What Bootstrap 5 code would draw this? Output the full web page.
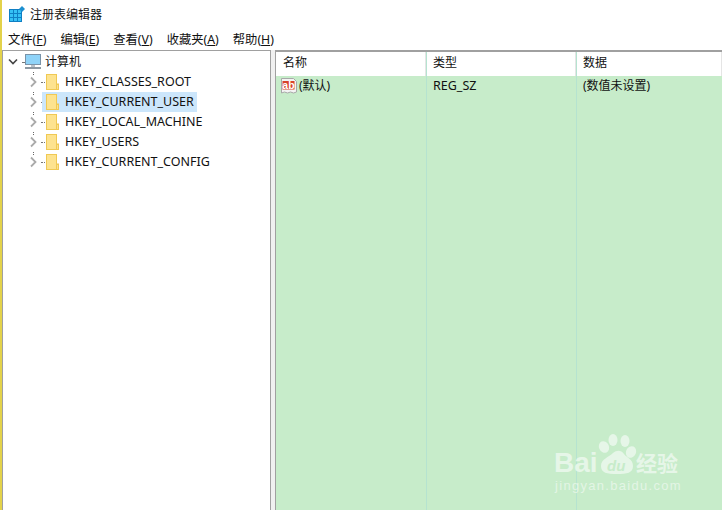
<!DOCTYPE html>
<html lang="zh"><head><meta charset="utf-8"><title>注册表编辑器</title>
<link href="https://cdn.jsdelivr.net/npm/bootstrap@5.3.0/dist/css/bootstrap.min.css" rel="stylesheet">
<style>
html,body{margin:0;height:510px;overflow:hidden}
body{font-family:"Noto Sans","Noto Sans CJK SC",sans-serif;font-size:12px;color:#111;background:#fff;line-height:16px}
.regapp{width:722px;height:510px;border-left:2px solid #e3d24a;position:relative;overflow:hidden}
.ttl{height:30px;padding-left:7px;gap:5px}
.appicon{margin-top:-2px}
.menubar{height:20px;padding-left:6px;gap:14px;font-size:12.3px}
.menubar u{text-underline-offset:1px}
.split{height:460px}
.treepane{width:269px;border:1px solid #a0a0a0;border-width:1px 1px 0 1px;padding-top:1px}
.sash{width:4px;background:#f0f0f0}
.listpane{flex:1;border-top:2px solid #a0a0a0;border-left:1px solid #a0a0a0;background:#c7ecca;position:relative;min-width:0}
.thead{height:24px;background:#fff}
.colA{width:150px;padding-left:7px;flex:none}
.colC{flex:1;padding-left:7px}
.thead .colA,.thead .colC{border-right:1px solid #e5e5e5;height:24px;line-height:22px}
.trow{height:22px;position:relative}
.trow .colA,.trow .colC{height:20px;line-height:20px}
.valicon{margin-left:-2px;margin-right:2px}
.gridlines{position:absolute;top:0;bottom:0;width:1px;background:#b5e3d0}
.node{height:20px;white-space:nowrap}
.rootchev{margin-left:4px;margin-right:3px}
.arrow{width:10px;flex:none;margin-left:26px;overflow:visible}
.dots{width:4px;height:1px;flex:none;margin:0 1px 0 2px;border-top:1px dotted #777}
.rootdots{margin:0 1px 0 0;width:2px}
.rootlabel{padding-left:4px}
.folder{flex:none}
.sel{background:#cce6fb;height:20px;padding:0 3px 0 4px;margin-left:-4px}
.latin{font-size:12.5px;padding-left:6px}
.latin0{font-size:12.5px}
.wm{position:absolute;left:548px;top:430px;overflow:visible}
.wm-big{font:bold 28px "Liberation Sans",sans-serif;fill:#e6f6e8}
.wm-du{font:bold italic 15px "Liberation Sans",sans-serif;fill:#c7ecca}
.wm-jy{font:bold 21px "Noto Sans CJK SC",sans-serif;fill:#e6f6e8}
.wm-url{font:13px "Liberation Sans",sans-serif;letter-spacing:1.3px;fill:#e3f5e5}
</style></head>
<body>
<div class="regapp">
  <div class="ttl d-flex align-items-center">
    <svg class="appicon" width="16" height="16" viewBox="0 0 16 16"><rect x="0" y="3" width="13" height="13" fill="#0f7fc4"/><g fill="#35c0f5"><rect x="1" y="4" width="3" height="3"/><rect x="5" y="4" width="3" height="3"/><rect x="9" y="4" width="3" height="3"/><rect x="1" y="8" width="3" height="3"/><rect x="5" y="8" width="3" height="3"/><rect x="9" y="8" width="3" height="3"/><rect x="1" y="12" width="3" height="3"/><rect x="5" y="12" width="3" height="3"/><rect x="9" y="12" width="3" height="3"/></g><path d="M13 0l3 3-3 3-3-3z" fill="#1c8fd0"/></svg>
    <span>注册表编辑器</span>
  </div>
  <div class="menubar d-flex align-items-center">
    <span>文件(<u>F</u>)</span><span>编辑(<u>E</u>)</span><span>查看(<u>V</u>)</span><span>收藏夹(<u>A</u>)</span><span>帮助(<u>H</u>)</span>
  </div>
  <div class="split d-flex">
    <div class="treepane">
      <div class="node d-flex align-items-center">
        <svg class="rootchev" width="12" height="10" viewBox="0 0 12 10"><path d="M2 2.5l4 4 4-4" fill="none" stroke="#444" stroke-width="1.6"/></svg>
        <span class="dots rootdots"></span>
        <svg width="16" height="16" viewBox="0 0 16 16"><rect x=".5" y=".5" width="15" height="10" fill="#5cb8f0" stroke="#7a93a8"/><rect x="1" y="1" width="14" height="9" fill="#8fd3f8"/><rect x="6" y="11" width="4" height="2" fill="#b9c2c9"/><rect x="0" y="13" width="16" height="2" fill="#8d99a3"/></svg>
        <span class="rootlabel">计算机</span>
      </div>
      <div class="node d-flex align-items-center"><svg class="arrow" width="10" height="12" viewBox="0 0 10 12"><path d="M2 1.5l4.5 4.5L2 10.500" fill="none" stroke="#aaa" stroke-width="1.800"/><path d="M4-4h1v1H4zM4-2h1v1H4z" fill="#666"/></svg><span class="dots"></span><svg class="folder" width="13" height="16" viewBox="0 0 13 16"><rect x=".5" y=".5" width="10" height="15" fill="#fde38f" stroke="#f0c954"/><rect x="10.500" y="10" width="2" height="5.500" fill="#fde38f" stroke="#f0c954"/></svg><span class="latin">HKEY_CLASSES_ROOT</span></div>
      <div class="node d-flex align-items-center"><svg class="arrow" width="10" height="12" viewBox="0 0 10 12"><path d="M2 1.5l4.5 4.5L2 10.500" fill="none" stroke="#aaa" stroke-width="1.800"/><path d="M4-4h1v1H4zM4-2h1v1H4z" fill="#666"/></svg><span class="dots"></span><span class="sel d-flex align-items-center"><svg class="folder" width="13" height="16" viewBox="0 0 13 16"><rect x=".5" y=".5" width="10" height="15" fill="#fde38f" stroke="#f0c954"/><rect x="10.500" y="10" width="2" height="5.500" fill="#fde38f" stroke="#f0c954"/></svg><span class="latin">HKEY_CURRENT_USER</span></span></div>
      <div class="node d-flex align-items-center"><svg class="arrow" width="10" height="12" viewBox="0 0 10 12"><path d="M2 1.5l4.5 4.5L2 10.500" fill="none" stroke="#aaa" stroke-width="1.800"/><path d="M4-4h1v1H4zM4-2h1v1H4z" fill="#666"/></svg><span class="dots"></span><svg class="folder" width="13" height="16" viewBox="0 0 13 16"><rect x=".5" y=".5" width="10" height="15" fill="#fde38f" stroke="#f0c954"/><rect x="10.500" y="10" width="2" height="5.500" fill="#fde38f" stroke="#f0c954"/></svg><span class="latin">HKEY_LOCAL_MACHINE</span></div>
      <div class="node d-flex align-items-center"><svg class="arrow" width="10" height="12" viewBox="0 0 10 12"><path d="M2 1.5l4.5 4.5L2 10.500" fill="none" stroke="#aaa" stroke-width="1.800"/><path d="M4-4h1v1H4zM4-2h1v1H4z" fill="#666"/></svg><span class="dots"></span><svg class="folder" width="13" height="16" viewBox="0 0 13 16"><rect x=".5" y=".5" width="10" height="15" fill="#fde38f" stroke="#f0c954"/><rect x="10.500" y="10" width="2" height="5.500" fill="#fde38f" stroke="#f0c954"/></svg><span class="latin">HKEY_USERS</span></div>
      <div class="node d-flex align-items-center"><svg class="arrow" width="10" height="12" viewBox="0 0 10 12"><path d="M2 1.5l4.5 4.5L2 10.500" fill="none" stroke="#aaa" stroke-width="1.800"/><path d="M4-4h1v1H4zM4-2h1v1H4z" fill="#666"/></svg><span class="dots"></span><svg class="folder" width="13" height="16" viewBox="0 0 13 16"><rect x=".5" y=".5" width="10" height="15" fill="#fde38f" stroke="#f0c954"/><rect x="10.500" y="10" width="2" height="5.500" fill="#fde38f" stroke="#f0c954"/></svg><span class="latin">HKEY_CURRENT_CONFIG</span></div>
    </div>
    <div class="sash"></div>
    <div class="listpane">
      <span class="gridlines" style="left:150px"></span><span class="gridlines" style="left:300px"></span>
      <div class="thead d-flex"><div class="colA">名称</div><div class="colA">类型</div><div class="colC">数据</div></div>
      <div class="trow d-flex">
        <div class="colA d-flex align-items-center"><svg class="valicon" width="16" height="16" viewBox="0 0 16 16"><path d="M.5.5h12l3 3v10.500l-3 1-3-1-3 1-3-1-3 1z" fill="#f4f4f4" stroke="#a8a8a8"/><rect x="1.500" y="3" width="12" height="8.500" fill="#d8432a"/><text x="7.500" y="10.500" text-anchor="middle" font-family="Liberation Sans" font-weight="700" font-size="10.500" fill="#fff">ab</text></svg><span>(默认)</span></div>
        <div class="colA latin0">REG_SZ</div><div class="colC">(数值未设置)</div>
      </div>
    </div>
  </div>
  <svg class="wm" width="140" height="70" viewBox="0 0 140 70">
    <text class="wm-big" x="4" y="41.500">Bai</text>
    <g fill="#e6f6e8"><ellipse cx="54" cy="17" rx="5" ry="6" transform="rotate(-25 54 17)"/><ellipse cx="63" cy="10" rx="4.500" ry="6"/><ellipse cx="75" cy="11" rx="4.500" ry="6"/><ellipse cx="81" cy="22" rx="5" ry="6" transform="rotate(25 81 22)"/><path d="M51 36c0-7 8-9 12-13 4-3 8-3 11 1 3 4 9 5 9 12 0 7-6 8-16 8s-16-1-16-8z"/></g>
    <text class="wm-du" x="57" y="41">du</text>
    <text class="wm-jy" x="86" y="41">经验</text>
    <text class="wm-url" x="5" y="59.500">jingyan.baidu.com</text>
  </svg>
</div>
</body></html>
